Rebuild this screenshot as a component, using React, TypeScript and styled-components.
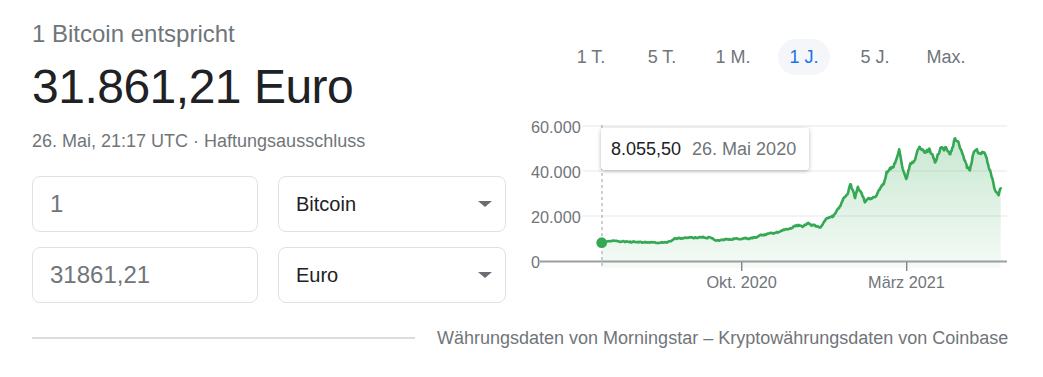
import React from "react";
import styled, { createGlobalStyle } from "styled-components";

const GlobalStyle = createGlobalStyle`
  html, body { margin: 0; padding: 0; background: #fff; }
  body { font-family: "Liberation Sans", Arial, sans-serif; }
  * { box-sizing: border-box; }
`;

const Page = styled.div`
  width: 1043px;
  height: 377px;
  display: flex;
  flex-direction: column;
  overflow: hidden;
`;

const Top = styled.div`
  display: flex;
  height: 303px;
`;

const LeftCol = styled.div`
  width: 520px;
  padding-left: 32px;
  display: flex;
  flex-direction: column;
`;

const Subtitle = styled.div`
  margin-top: 20px;
  font-size: 24px;
  line-height: 28px;
  color: #70757a;
`;

const BigValue = styled.div`
  margin-top: 11px;
  font-size: 48px;
  line-height: 56px;
  color: #202124;
  letter-spacing: -0.5px;
`;

const Meta = styled.div`
  margin-top: 14.5px;
  font-size: 18px;
  line-height: 22px;
  color: #70757a;
`;

const Converter = styled.div`
  margin-top: 24.5px;
  display: grid;
  grid-template-columns: 226px 228px;
  grid-auto-rows: 56px;
  column-gap: 20px;
  row-gap: 15px;
`;

const ValueInput = styled.input`
  width: 100%;
  height: 100%;
  border: 1px solid #dfe1e5;
  border-radius: 8px;
  padding: 0 17px;
  font-family: "Liberation Sans", Arial, sans-serif;
  font-size: 24px;
  color: #70757a;
  background: #fff;
  outline: none;
`;

const Select = styled.div`
  display: flex;
  align-items: center;
  justify-content: space-between;
  border: 1px solid #dfe1e5;
  border-radius: 8px;
  padding: 0 13px 0 17px;
  font-size: 20px;
  color: #202124;
  background: #fff;
`;

const Caret = styled.span`
  width: 0;
  height: 0;
  border-left: 7px solid transparent;
  border-right: 7px solid transparent;
  border-top: 6px solid #6b6f73;
`;

const RightCol = styled.div`
  width: 500px;
  display: flex;
  flex-direction: column;
`;

const Tabs = styled.div`
  margin-top: 39px;
  margin-left: 45px;
  display: flex;
  gap: 19px;
`;

const Tab = styled.button<{ $active?: boolean }>`
  width: 52px;
  height: 36px;
  border: none;
  border-radius: 18px;
  padding: 0;
  font-family: "Liberation Sans", Arial, sans-serif;
  font-size: 18px;
  color: ${(p) => (p.$active ? "#1a73e8" : "#70757a")};
  background: ${(p) => (p.$active ? "#f4f6f9" : "transparent")};
  cursor: pointer;
`;

const ChartWrap = styled.div`
  position: relative;
  margin-top: 35px;
  width: 500px;
  height: 185px;
`;

const Tooltip = styled.div`
  position: absolute;
  left: 81px;
  top: 18px;
  height: 42px;
  display: flex;
  align-items: center;
  gap: 11px;
  padding: 0 13px 0 10px;
  background: #fff;
  border-radius: 3px;
  box-shadow: 0 1px 4px rgba(0, 0, 0, 0.28);
  font-size: 18px;
  white-space: nowrap;
`;

const TipValue = styled.span`
  color: #202124;
`;

const TipDate = styled.span`
  color: #70757a;
`;

const Footer = styled.div`
  margin-top: 24px;
  padding-left: 32px;
  height: 22px;
  display: flex;
  align-items: center;
  gap: 22px;
`;

const Rule = styled.div`
  width: 383px;
  height: 2px;
  background: #dadce0;
`;

const Source = styled.div`
  font-size: 18px;
  line-height: 22px;
  color: #70757a;
  white-space: nowrap;
`;

const KEY: [number, number][] = [
  [601.7, 242.7],
  [610, 240.9],
  [640, 242.3],
  [666.7, 242.7],
  [675, 238.3],
  [690, 237.7],
  [710, 237.3],
  [715, 240.7],
  [730, 239.3],
  [750, 238.3],
  [763.3, 235],
  [780, 231.7],
  [790, 228.3],
  [798.3, 225],
  [803.3, 226],
  [808, 223.3],
  [813, 225.5],
  [820, 227.3],
  [826.7, 218.3],
  [833, 216.7],
  [838, 210],
  [843, 200],
  [848, 192],
  [850.5, 185],
  [853, 192],
  [855, 198],
  [858, 188],
  [861, 194],
  [865, 201.7],
  [868, 200],
  [871.7, 198],
  [876, 196],
  [880, 188],
  [884, 184],
  [886.7, 171.7],
  [890, 170],
  [893, 166.7],
  [896, 160],
  [899.3, 151.7],
  [901, 162],
  [903.3, 171.7],
  [906.7, 178.3],
  [910, 165],
  [915, 161.7],
  [918, 152],
  [920, 146.7],
  [925, 151.7],
  [930, 150],
  [935, 163.3],
  [940, 148.3],
  [946.7, 148.3],
  [950, 155],
  [955, 138.3],
  [960, 146.7],
  [966.7, 166.7],
  [970, 171.7],
  [973.3, 153.3],
  [980, 151.7],
  [985, 155],
  [990, 170],
  [995, 190],
  [998.3, 195],
  [1000.7, 188.3],
];

function mulberry32(a: number) {
  return function () {
    a |= 0;
    a = (a + 0x6d2b79f5) | 0;
    let t = Math.imul(a ^ (a >>> 15), 1 | a);
    t = (t + Math.imul(t ^ (t >>> 7), 61 | t)) ^ t;
    return ((t ^ (t >>> 14)) >>> 0) / 4294967296;
  };
}

function interp(x: number) {
  for (let i = 0; i < KEY.length - 1; i++) {
    const [x0, y0] = KEY[i];
    const [x1, y1] = KEY[i + 1];
    if (x >= x0 && x <= x1) {
      const t = (x - x0) / (x1 - x0);
      return y0 + (y1 - y0) * t;
    }
  }
  return KEY[KEY.length - 1][1];
}

function buildPaths() {
  const rand = mulberry32(11);
  const pts: [number, number][] = [];
  let n = 0;
  const x0 = KEY[0][0];
  const x1 = KEY[KEY.length - 1][0];
  for (let x = x0; x <= x1; x += 0.7) {
    const yb = interp(x);
    const amp = 0.35 + 2.4 * Math.max(0, (261 - yb) / 135);
    n = n * 0.55 + (rand() - 0.5) * amp * 1.5;
    const y = x === x0 ? yb : yb + n;
    pts.push([x, y]);
  }
  pts.push([x1, KEY[KEY.length - 1][1]]);
  const line = pts
    .map(([x, y], i) => `${i === 0 ? "M" : "L"}${x.toFixed(2)},${y.toFixed(2)}`)
    .join(" ");
  const area = `${line} L${x1},268 L${x0},268 Z`;
  return { line, area };
}

const GRID = [
  { label: "60.000", y: 126 },
  { label: "40.000", y: 171 },
  { label: "20.000", y: 216 },
];

const Chart: React.FC = () => {
  const { line, area } = React.useMemo(buildPaths, []);
  return (
    <svg width="500" height="185" viewBox="520 110 500 185" style={{ display: "block" }}>
      <defs>
        <linearGradient id="fillGrad" gradientUnits="userSpaceOnUse" x1="0" y1="130" x2="0" y2="268">
          <stop offset="0" stopColor="#34a853" stopOpacity="0.28" />
          <stop offset="1" stopColor="#34a853" stopOpacity="0.05" />
        </linearGradient>
      </defs>
      {GRID.map((g) => (
        <g key={g.label}>
          <line x1="583" x2="1007" y1={g.y} y2={g.y} stroke="#eeeff0" strokeWidth="1.5" />
          <text
            x="531"
            y={g.y + 0.5}
            dominantBaseline="central"
            fontSize="16.25"
            fill="#70757a"
            fontFamily="Liberation Sans, Arial, sans-serif"
          >
            {g.label}
          </text>
        </g>
      ))}
      <text
        x="531"
        y="261.5"
        dominantBaseline="central"
        fontSize="16.25"
        fill="#70757a"
        fontFamily="Liberation Sans, Arial, sans-serif"
      >
        0
      </text>
      <path d={area} fill="url(#fillGrad)" />
      <line x1="602" x2="602" y1="125" y2="267" stroke="#9aa0a6" strokeWidth="1" strokeDasharray="3 3" />
      <line x1="540" x2="1007" y1="261.5" y2="261.5" stroke="#9a9ea1" strokeWidth="2" />
      <line x1="741.7" x2="741.7" y1="262" y2="271" stroke="#80868b" strokeWidth="1.4" />
      <line x1="906.7" x2="906.7" y1="262" y2="271" stroke="#80868b" strokeWidth="1.4" />
      <path d={line} fill="none" stroke="#34a853" strokeWidth="2.6" strokeLinejoin="round" strokeLinecap="round" />
      <circle cx="601.7" cy="242.7" r="5.4" fill="#34a853" />
      <text
        x="741.7"
        y="281.5"
        textAnchor="middle"
        dominantBaseline="central"
        fontSize="16.25"
        fill="#70757a"
        fontFamily="Liberation Sans, Arial, sans-serif"
      >
        Okt. 2020
      </text>
      <text
        x="906.5"
        y="281.5"
        textAnchor="middle"
        dominantBaseline="central"
        fontSize="16.25"
        fill="#70757a"
        fontFamily="Liberation Sans, Arial, sans-serif"
      >
        März 2021
      </text>
    </svg>
  );
};

const RANGES = ["1 T.", "5 T.", "1 M.", "1 J.", "5 J.", "Max."];

export default function App() {
  return (
    <Page>
      <GlobalStyle />
      <Top>
        <LeftCol>
          <Subtitle>1 Bitcoin entspricht</Subtitle>
          <BigValue>31.861,21 Euro</BigValue>
          <Meta>26. Mai, 21:17 UTC · Haftungsausschluss</Meta>
          <Converter>
            <ValueInput defaultValue="1" />
            <Select>
              Bitcoin
              <Caret />
            </Select>
            <ValueInput defaultValue="31861,21" />
            <Select>
              Euro
              <Caret />
            </Select>
          </Converter>
        </LeftCol>
        <RightCol>
          <Tabs>
            {RANGES.map((r) => (
              <Tab key={r} $active={r === "1 J."}>
                {r}
              </Tab>
            ))}
          </Tabs>
          <ChartWrap>
            <Chart />
            <Tooltip>
              <TipValue>8.055,50</TipValue>
              <TipDate>26. Mai 2020</TipDate>
            </Tooltip>
          </ChartWrap>
        </RightCol>
      </Top>
      <Footer>
        <Rule />
        <Source>Währungsdaten von Morningstar – Kryptowährungsdaten von Coinbase</Source>
      </Footer>
    </Page>
  );
}
